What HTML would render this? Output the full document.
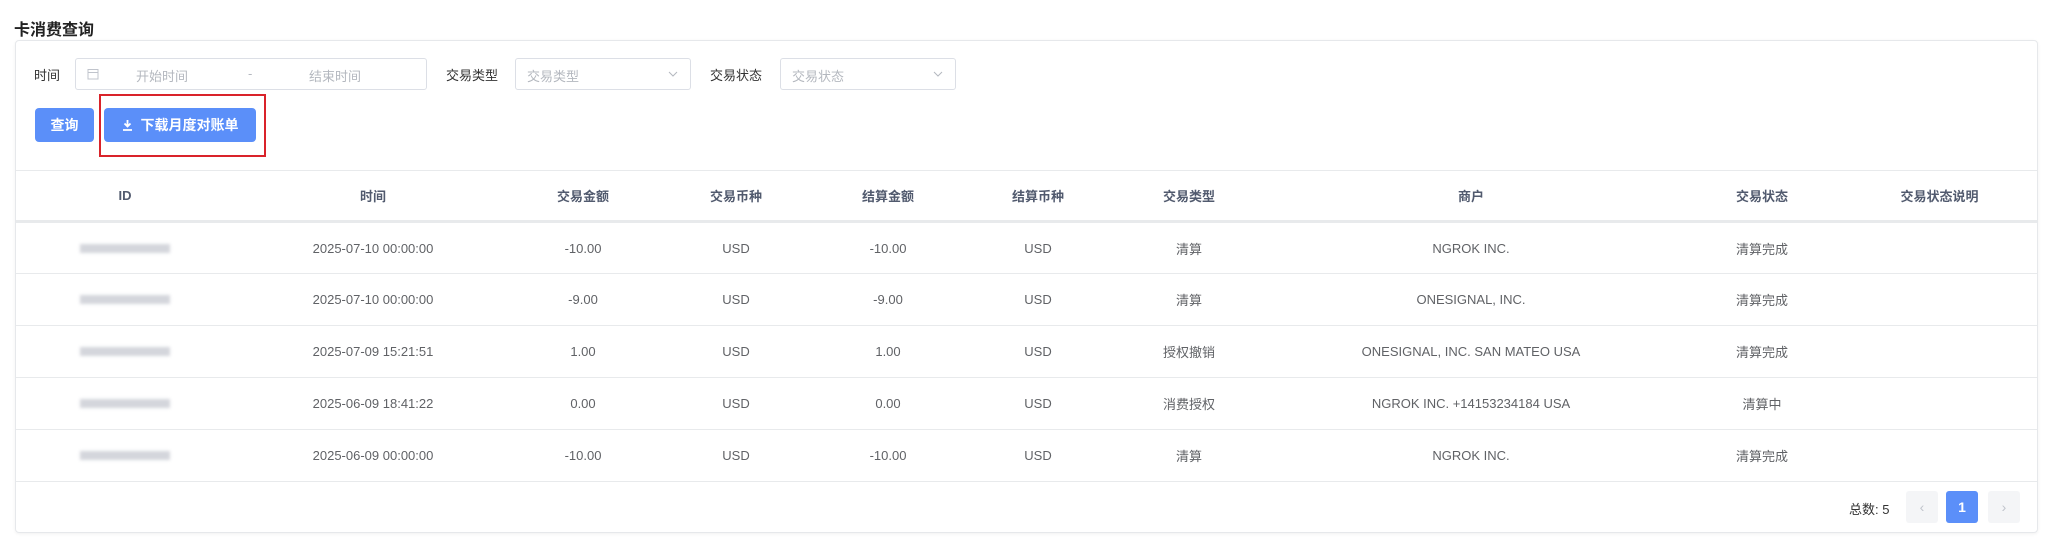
<!DOCTYPE html>
<html><head><meta charset="utf-8"><style>
*{box-sizing:border-box;margin:0;padding:0}
body{width:2054px;height:540px;background:#fff;font-family:"Liberation Sans","Noto Sans CJK SC",sans-serif;color:#606266;font-size:13px;position:relative;overflow:hidden}
.abs{position:absolute}
.title{left:14px;top:16px;font-size:16px;font-weight:bold;color:#222}
.card{left:15px;top:40px;width:2023px;height:493px;border:1px solid #e6e8eb;border-radius:4px;box-shadow:0 1px 3px rgba(0,0,0,.06)}
.lbl{font-size:13px;color:#333;top:65px}
.inp{border:1px solid #dcdfe6;border-radius:3px;height:32px;top:58px;color:#b4b8bf;font-size:13px}
.btn{background:#5b8ff9;color:#fff;border-radius:4px;font-size:14px;font-weight:bold;top:108px;height:34px;line-height:34px;text-align:center}
table{position:absolute;left:16px;top:170px;border-collapse:collapse;table-layout:fixed;width:2021px}
td,th{text-align:center;font-size:13px;height:52px;border-bottom:1px solid #e8eaec}
th{color:#515a6e;font-weight:bold;height:51px;border-top:1px solid #e8eaec;border-bottom:3px solid #e8eaec}
.blur{display:inline-block;width:90px;height:9px;background:#d4d6dc;filter:blur(1.5px);margin-left:0}
.pg{top:491px;width:32px;height:32px;border-radius:3px;text-align:center;line-height:32px;font-size:14px}
</style></head><body>
<div class="abs title">卡消费查询</div>
<div class="abs card"></div>
<div class="abs lbl" style="left:34px">时间</div>
<div class="abs inp" style="left:75px;width:352px">
 <svg class="abs" style="left:11px;top:9px" width="12" height="12" viewBox="0 0 12 12"><rect x="1" y="1.5" width="10" height="9.5" fill="none" stroke="#c0c4cc"/><line x1="1" y1="4.5" x2="11" y2="4.5" stroke="#c0c4cc"/></svg>
 <span class="abs" style="left:60px;top:7px">开始时间</span>
 <span class="abs" style="left:172px;top:7px">-</span>
 <span class="abs" style="left:233px;top:7px">结束时间</span>
</div>
<div class="abs lbl" style="left:446px">交易类型</div>
<div class="abs inp" style="left:515px;width:176px"><span class="abs" style="left:11px;top:7px">交易类型</span><svg class="abs" style="right:12px;top:12px" width="10" height="6" viewBox="0 0 10 6"><path d="M1 1l4 4 4-4" stroke="#b4b8bf" fill="none"/></svg></div>
<div class="abs lbl" style="left:710px">交易状态</div>
<div class="abs inp" style="left:780px;width:176px"><span class="abs" style="left:11px;top:7px">交易状态</span><svg class="abs" style="right:12px;top:12px" width="10" height="6" viewBox="0 0 10 6"><path d="M1 1l4 4 4-4" stroke="#b4b8bf" fill="none"/></svg></div>
<div class="abs btn" style="left:35px;width:59px">查询</div>
<div class="abs btn" style="left:104px;width:152px"><svg style="vertical-align:-1px;margin-right:8px" width="11" height="12" viewBox="0 0 11 12"><path d="M5.5 1v6M2.5 4.5l3 3 3-3M1 11h9" stroke="#fff" stroke-width="1.8" fill="none"/></svg>下载月度对账单</div>
<div class="abs" style="left:99px;top:94px;width:167px;height:63px;border:2px solid #d9232a"></div>
<table>
<colgroup><col style="width:218px"><col style="width:278px"><col style="width:142px"><col style="width:164px"><col style="width:140px"><col style="width:160px"><col style="width:142px"><col style="width:422px"><col style="width:160px"><col style="width:195px"></colgroup>
<tr><th>ID</th><th>时间</th><th>交易金额</th><th>交易币种</th><th>结算金额</th><th>结算币种</th><th>交易类型</th><th>商户</th><th>交易状态</th><th>交易状态说明</th></tr>
<tr><td><span class="blur"></span></td><td>2025-07-10 00:00:00</td><td>-10.00</td><td>USD</td><td>-10.00</td><td>USD</td><td>清算</td><td>NGROK INC.</td><td>清算完成</td><td></td></tr>
<tr><td><span class="blur"></span></td><td>2025-07-10 00:00:00</td><td>-9.00</td><td>USD</td><td>-9.00</td><td>USD</td><td>清算</td><td>ONESIGNAL, INC.</td><td>清算完成</td><td></td></tr>
<tr><td><span class="blur"></span></td><td>2025-07-09 15:21:51</td><td>1.00</td><td>USD</td><td>1.00</td><td>USD</td><td>授权撤销</td><td>ONESIGNAL, INC. SAN MATEO USA</td><td>清算完成</td><td></td></tr>
<tr><td><span class="blur"></span></td><td>2025-06-09 18:41:22</td><td>0.00</td><td>USD</td><td>0.00</td><td>USD</td><td>消费授权</td><td>NGROK INC. +14153234184 USA</td><td>清算中</td><td></td></tr>
<tr><td><span class="blur"></span></td><td>2025-06-09 00:00:00</td><td>-10.00</td><td>USD</td><td>-10.00</td><td>USD</td><td>清算</td><td>NGROK INC.</td><td>清算完成</td><td></td></tr>
</table>
<div class="abs" style="left:1849px;top:499px;font-size:13px;color:#333">总数: 5</div>
<div class="abs pg" style="left:1906px;background:#f4f5f7;color:#c0c4cc">‹</div>
<div class="abs pg" style="left:1946px;background:#5b8ff9;color:#fff;font-weight:bold">1</div>
<div class="abs pg" style="left:1988px;background:#f4f5f7;color:#c0c4cc">›</div>
</body></html>
